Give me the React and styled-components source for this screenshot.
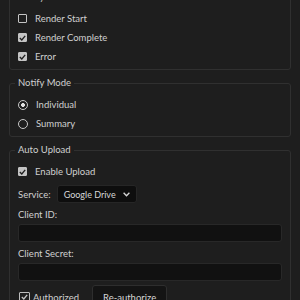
import React, { useState } from "react";
import styled, { createGlobalStyle } from "styled-components";

const Global = createGlobalStyle`
  html, body {
    margin: 0;
    padding: 0;
    background: #1e1e1e;
    overflow: hidden;
  }
  body {
    font-family: "Lato", "Open Sans", sans-serif;
    font-size: 9.5px;
    color: #d0d0d0;
  }
`;

const Page = styled.div`
  margin-top: -9px;
  padding: 0 9px 0 9px;
  display: flex;
  flex-direction: column;
  gap: 7px;
`;

const Group = styled.fieldset`
  margin: 0;
  border: 1px solid #303030;
  border-radius: 3px;
  padding: 6px 8px 3px 8px;
  display: flex;
  flex-direction: column;
  gap: ${(p) => (p.$gap ? p.$gap : 0)}px;
`;

const Legend = styled.legend`
  padding: 0 3px;
  margin-left: -3px;
  line-height: 12px;
  font-size: 9.5px;
  color: #d0d0d0;
`;

const Row = styled.label`
  display: flex;
  align-items: center;
  gap: ${(p) => (p.$gap != null ? p.$gap : 8)}px;
  height: ${(p) => p.$h || 19}px;
  cursor: pointer;
`;

const Box = styled.span`
  width: 9px;
  height: 9px;
  box-sizing: border-box;
  border: 1px solid #c4c4c4;
  border-radius: 1px;
  background: ${(p) => (p.$checked ? "#c4c4c4" : "#1e1e1e")};
  display: flex;
  align-items: center;
  justify-content: center;
`;

const OutlineBox = styled(Box)`
  width: 11px;
  height: 11px;
  margin-left: 1px;
  background: transparent;
  border-color: #bdbdbd;
`;

const Radio = styled.span`
  width: 10px;
  height: 10px;
  box-sizing: border-box;
  border-radius: 50%;
  border: 1.5px solid #c8c8c8;
  background: ${(p) =>
    p.$checked
      ? "radial-gradient(circle, #e2e2e2 0 1.7px, #1e1e1e 2.2px)"
      : "#1e1e1e"};
`;

const FieldRow = styled.div`
  display: flex;
  align-items: center;
  gap: 6px;
  height: 18px;
`;

const Select = styled.div`
  width: 80px;
  height: 18px;
  box-sizing: border-box;
  background: #0e0e0e;
  border: 1px solid #262626;
  border-radius: 3px;
  display: flex;
  align-items: center;
  justify-content: space-between;
  padding: 0 6px 0 6px;
  color: #d6d6d6;
  white-space: nowrap;
  font-size: 9px;
`;

const Stack = styled.div`
  display: flex;
  flex-direction: column;
  gap: 2px;
`;

const FieldLabel = styled.div`
  height: 15px;
  line-height: 15px;
`;

const Input = styled.div`
  height: 18px;
  box-sizing: border-box;
  background: #111111;
  border: 1px solid #282828;
  border-radius: 3px;
`;

const Actions = styled.div`
  display: grid;
  grid-template-columns: 74px auto;
  align-items: center;
  justify-items: start;
  height: 24px;
`;

const Button = styled.button`
  height: 24px;
  padding: 0 10px;
  background: #141414;
  border: 1px solid #2e2e2e;
  border-radius: 3px;
  color: #d6d6d6;
  font-family: inherit;
  font-size: 9.5px;
`;

const Check = ({ color = "#1e1e1e" }) => (
  <svg width="7" height="6" viewBox="0 0 7 6">
    <path d="M0.8 3 L2.8 5 L6.2 0.8" fill="none" stroke={color} strokeWidth="1.3" />
  </svg>
);

const CheckRow = ({ label, checked }) => (
  <Row>
    <Box $checked={checked}>{checked && <Check />}</Box>
    {label}
  </Row>
);

const Chevron = () => (
  <svg width="7" height="5" viewBox="0 0 7 5">
    <path d="M0.6 0.8 L3.5 3.8 L6.4 0.8" fill="none" stroke="#d6d6d6" strokeWidth="1.3" />
  </svg>
);

export default function App() {
  const [mode, setMode] = useState("individual");
  return (
    <>
      <Global />
      <Page>
        <Group>
          <Legend>Notify On</Legend>
          <CheckRow label="Render Start" checked={false} />
          <CheckRow label="Render Complete" checked />
          <CheckRow label="Error" checked />
        </Group>
        <Group>
          <Legend>Notify Mode</Legend>
          <Row onClick={() => setMode("individual")}>
            <Radio $checked={mode === "individual"} />
            Individual
          </Row>
          <Row onClick={() => setMode("summary")}>
            <Radio $checked={mode === "summary"} />
            Summary
          </Row>
        </Group>
        <Group $gap={4}>
          <Legend>Auto Upload</Legend>
          <CheckRow label="Enable Upload" checked />
          <FieldRow>
            Service:
            <Select>
              Google Drive
              <Chevron />
            </Select>
          </FieldRow>
          <Stack>
            <FieldLabel>Client ID:</FieldLabel>
            <Input />
          </Stack>
          <Stack>
            <FieldLabel>Client Secret:</FieldLabel>
            <Input />
          </Stack>
          <Actions>
            <Row $h={24} $gap={3}>
              <OutlineBox>
                <Check color="#c4c4c4" />
              </OutlineBox>
              Authorized
            </Row>
            <Button>Re-authorize</Button>
          </Actions>
        </Group>
      </Page>
    </>
  );
}
